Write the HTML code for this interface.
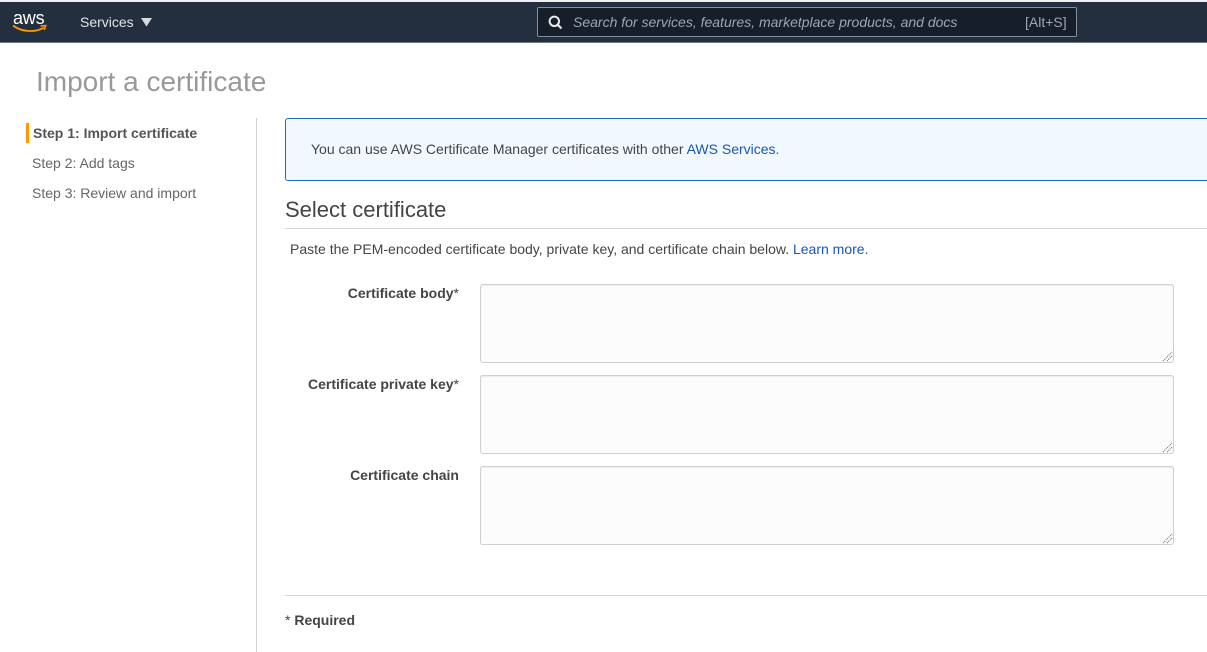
<!DOCTYPE html>
<html>
<head>
<meta charset="utf-8">
<style>
html,body{margin:0;padding:0;width:1207px;height:652px;overflow:hidden;background:#fff;font-family:"Liberation Sans",sans-serif;color:#444;}
.a{position:absolute;white-space:nowrap;}
.lbl{font-size:14px;font-weight:bold;color:#444;line-height:18px;text-align:right;right:748px;}
.lbl span{font-weight:normal;}
.ta{position:absolute;left:480px;width:692px;height:77px;border:1px solid #cfcfcf;border-radius:3px;background:#fcfcfc;box-shadow:inset 0 1px 1px #ebebeb;}
.ta svg{position:absolute;right:0;bottom:0;}
a{color:#1a56b0;text-decoration:none;}
</style>
</head>
<body>
<div class="a" style="left:0;top:0;width:1207px;height:2px;background:#f0f0f0;"></div>
<div class="a" style="left:0;top:2px;width:1207px;height:40px;background:#232f3e;"></div>
<div class="a" style="left:0;top:42px;width:1207px;height:1px;background:#6d7580;"></div>
<div class="a" style="left:13px;top:9px;font-size:18px;line-height:18px;color:#fff;letter-spacing:-0.2px;">aws</div>
<svg class="a" style="left:12px;top:23px;" width="36" height="11" viewBox="0 0 36 11"><path d="M1 2.500C10 9.500 24 9.500 32 4.500" fill="none" stroke="#f90" stroke-width="1.800"/><path d="M28.500 3L33.800 2.600L32.300 7" fill="none" stroke="#f90" stroke-width="1.500"/></svg>
<div class="a" style="left:80px;top:13px;font-size:14px;line-height:18px;color:#dfe5ea;">Services</div>
<svg class="a" style="left:140px;top:18px;" width="13" height="10"><path d="M1 0H12L6.500 8.500Z" fill="#d5dbdb"/></svg>
<div class="a" style="left:537px;top:7px;width:538px;height:28px;background:#161e2a;border:1px solid #87919c;border-radius:2px;"></div>
<svg class="a" style="left:548px;top:15px;" width="15" height="15" viewBox="0 0 15 15"><circle cx="6.300" cy="6.300" r="4.700" fill="none" stroke="#e8eaec" stroke-width="2"/><path d="M9.800 9.800L13.500 13.500" stroke="#e8eaec" stroke-width="2.200"/></svg>
<div class="a" style="left:573px;top:13px;font-size:14px;line-height:18px;font-style:italic;color:#9ba7b3;">Search for services, features, marketplace products, and docs</div>
<div class="a" style="left:1025px;top:13px;font-size:14px;line-height:18px;color:#9ba7b3;">[Alt+S]</div>

<div class="a" style="left:36px;top:65px;font-size:28px;line-height:34px;color:#999;">Import a certificate</div>

<div class="a" style="left:26px;top:123px;width:3px;height:20px;background:#f90;"></div>
<div class="a" style="left:33px;top:124px;font-size:14px;line-height:18px;font-weight:bold;color:#555;">Step 1: Import certificate</div>
<div class="a" style="left:32px;top:154px;font-size:14px;line-height:18px;color:#666;">Step 2: Add tags</div>
<div class="a" style="left:32px;top:184px;font-size:14px;line-height:18px;color:#666;">Step 3: Review and import</div>
<div class="a" style="left:256px;top:118px;width:1px;height:534px;background:#cfcfcf;"></div>

<div class="a" style="left:285px;top:118px;width:930px;height:61px;background:#f1f8ff;border:1px solid #1a6cc4;border-radius:3px;"></div>
<div class="a" style="left:311px;top:140px;font-size:14px;line-height:18px;color:#444;">You can use AWS Certificate Manager certificates with other <a>AWS Services.</a></div>

<div class="a" style="left:285px;top:197px;font-size:22px;line-height:26px;color:#444;">Select certificate</div>
<div class="a" style="left:285px;top:228px;width:922px;height:1px;background:#d5d5d5;"></div>
<div class="a" style="left:290px;top:240px;font-size:14px;line-height:18px;color:#444;">Paste the PEM-encoded certificate body, private key, and certificate chain below. <a>Learn more.</a></div>

<div class="a lbl" style="top:284px;">Certificate body<span>*</span></div>
<div class="ta" style="top:284px;"><svg width="11" height="11"><path d="M1 10L10 1M5 10L10 5" stroke="#666" stroke-width="1" stroke-dasharray="1 1" fill="none"/></svg></div>
<div class="a lbl" style="top:375px;">Certificate private key<span>*</span></div>
<div class="ta" style="top:375px;"><svg width="11" height="11"><path d="M1 10L10 1M5 10L10 5" stroke="#666" stroke-width="1" stroke-dasharray="1 1" fill="none"/></svg></div>
<div class="a lbl" style="top:466px;">Certificate chain</div>
<div class="ta" style="top:466px;"><svg width="11" height="11"><path d="M1 10L10 1M5 10L10 5" stroke="#666" stroke-width="1" stroke-dasharray="1 1" fill="none"/></svg></div>

<div class="a" style="left:285px;top:595px;width:922px;height:1px;background:#d5d5d5;"></div>
<div class="a" style="left:285px;top:611px;font-size:14px;line-height:18px;color:#444;">* <b>Required</b></div>
</body>
</html>
